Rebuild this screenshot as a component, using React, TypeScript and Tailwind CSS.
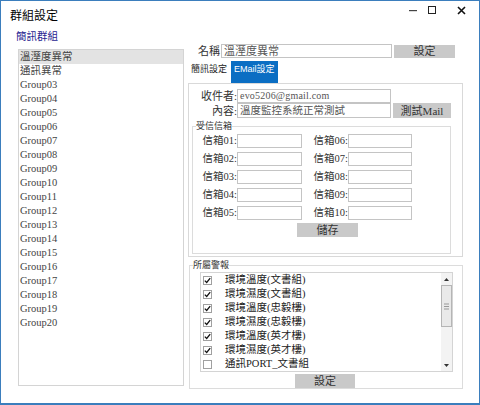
import React from 'react';

const groups = [
  '溫溼度異常',
  '通訊異常',
  ...Array.from({ length: 18 }, (_, i) => `Group${String(i + 3).padStart(2, '0')}`),
];

const alarms = [
  { label: '環境溫度(文書組)', checked: true },
  { label: '環境濕度(文書組)', checked: true },
  { label: '環境溫度(忠毅樓)', checked: true },
  { label: '環境濕度(忠毅樓)', checked: true },
  { label: '環境溫度(英才樓)', checked: true },
  { label: '環境濕度(英才樓)', checked: true },
  { label: '通訊PORT_文書組', checked: false },
];

const mailRows = [1, 2, 3, 4, 5];

function GrayButton({ label, className }: { label: string; className: string }) {
  return (
    <div
      className={`flex items-center justify-center whitespace-nowrap bg-[#c9c9c9] text-[11px] leading-[12px] text-[#333] ${className}`}
    >
      {label}
    </div>
  );
}

function Field({ value, className }: { value?: string; className: string }) {
  return (
    <div
      className={`flex items-center whitespace-nowrap border border-[#c4c4c4] bg-white pl-[2px] text-[#555] ${className}`}
    >
      {value}
    </div>
  );
}

function CheckBox({ checked }: { checked: boolean }) {
  return (
    <div className="flex h-[9px] w-[9px] items-center justify-center border border-[#a0a0a0] bg-white">
      {checked && (
        <svg width="7" height="7" viewBox="0 0 7 7">
          <path d="M0.8 3.6 L2.7 5.5 L6.2 1.2" fill="none" stroke="#111" strokeWidth="1.3" />
        </svg>
      )}
    </div>
  );
}

export default function App() {
  return (
    <div className="h-[405px] w-[480px] overflow-hidden border border-b-2 border-[#3b7ebd] bg-white font-['Liberation_Serif','Noto_Sans_CJK_TC',serif] text-[#333]">
      {/* Title bar */}
      <div className="flex h-[28px]">
        <div className="self-center pl-[9px] pt-[1px] font-['Liberation_Sans','Noto_Sans_CJK_TC',sans-serif] text-[12px] leading-[14px] text-black">
          群組設定
        </div>
        <div className="ml-auto mr-[13px] mt-[5px] flex items-start">
          <svg width="8" height="8" viewBox="0 0 8 8">
            <rect x="0" y="4" width="8" height="1.2" fill="#444" />
          </svg>
          <svg width="8" height="8" viewBox="0 0 8 8" className="ml-[11px]">
            <rect x="0.5" y="0.5" width="7" height="7" fill="none" stroke="#222" />
          </svg>
          <svg width="9" height="9" viewBox="0 0 9 9" className="ml-[21px]">
            <path d="M1 1 L8 8 M8 1 L1 8" stroke="#111" strokeWidth="1.6" />
          </svg>
        </div>
      </div>

      <div className="flex items-start">
        {/* Left: group list */}
        <div className="w-[183px]">
          <div className="ml-[15px] font-['Noto_Sans_CJK_TC',sans-serif] text-[10.5px] leading-[13px] text-[#1f2390]">
            簡訊群組
          </div>
          <div className="ml-[17px] mt-[7px] h-[337px] w-[166px] border border-[#d4d4d4]">
            {groups.map((g, i) => (
              <div
                key={g}
                className={`h-[14px] pl-[1px] text-[10.5px] leading-[14px] text-[#444] ${i === 0 ? 'bg-[#e3e3e3]' : ''}`}
              >
                {g}
              </div>
            ))}
          </div>
        </div>

        {/* Right: settings */}
        <div className="ml-[3px] mt-[15px] w-[276px]">
          <div className="flex h-[14px] items-center">
            <div className="w-[33px] whitespace-nowrap text-right text-[11px] leading-[14px] text-[#333]">名稱</div>
            <Field value="溫溼度異常" className="ml-[1px] h-[14px] w-[171px] text-[11px] leading-[12px] text-[#333]" />
            <GrayButton label="設定" className="ml-[2px] h-[13px] w-[61px]" />
          </div>

          {/* Tabs */}
          <div className="mt-[3px] flex h-[22px] items-stretch font-['Liberation_Sans','Noto_Sans_CJK_TC',sans-serif] text-[9px] leading-[10px]">
            <div className="ml-[4px] pt-[3px] text-[#222]">簡訊設定</div>
            <div className="ml-[4px] bg-[#0b6ec3] px-[3px] pt-[3px] text-white">EMail設定</div>
          </div>

          {/* Tab page */}
          <div className="ml-[1px] h-[174px] w-[275px] border border-[#d9d9d9]">
            <div className="mt-[5px] flex h-[14px] items-center">
              <div className="w-[48px] whitespace-nowrap text-right text-[11px] leading-[14px]">收件者:</div>
              <Field value="evo5206@gmail.com" className="h-[14px] w-[154px] text-[10px] leading-[12px] tracking-[0.2px]" />
            </div>
            <div className="flex h-[15px] items-center">
              <div className="w-[48px] whitespace-nowrap text-right text-[11px] leading-[14px]">內容:</div>
              <Field value="溫度監控系統正常測試" className="h-[15px] w-[154px] text-[10.5px] leading-[12px]" />
              <GrayButton label="測試Mail" className="ml-[2px] h-[15px] w-[58px]" />
            </div>

            <fieldset className="ml-[3px] mt-[2px] w-[259px] border border-[#dcdcdc] pb-[16px]">
              <legend className="ml-[3px] text-[9px] leading-[12px] text-[#333]">受信信箱</legend>
              <div className="mt-[2px] flex flex-col gap-[4px]">
                {mailRows.map((n) => (
                  <div key={n} className="flex h-[14px] items-center text-[10.5px] leading-[14px]">
                    <div className="ml-[8px] flex w-[36px] justify-end whitespace-nowrap">
                      信箱{String(n).padStart(2, '0')}:
                    </div>
                    <Field className="h-[14px] w-[65px]" />
                    <div className="ml-[10px] flex w-[36px] justify-end whitespace-nowrap">
                      信箱{String(n + 5).padStart(2, '0')}:
                    </div>
                    <Field className="h-[14px] w-[64px]" />
                  </div>
                ))}
              </div>
              <GrayButton label="儲存" className="ml-[104px] mt-[3px] h-[14px] w-[61px]" />
            </fieldset>
          </div>

          {/* Alarm list */}
          <fieldset className="ml-[2px] mt-[2px] w-[274px] border border-[#dcdcdc]">
            <legend className="ml-[3px] text-[9px] leading-[12px] text-[#333]">所屬警報</legend>
            <div className="ml-[10px] mt-[1px] flex h-[100px] w-[253px] border border-[#d4d4d4]">
              <div className="flex-1">
                {alarms.map((a) => (
                  <div key={a.label} className="flex h-[14px] items-center pl-[2px]">
                    <CheckBox checked={a.checked} />
                    <div className="ml-[13px] whitespace-nowrap text-[10.5px] leading-[14px] text-[#222]">{a.label}</div>
                  </div>
                ))}
              </div>
              <div className="flex w-[11px] flex-col bg-[#f3f3f3]">
                <div className="flex h-[12px] items-center justify-center">
                  <svg width="5" height="3" viewBox="0 0 5 3">
                    <path d="M0 3 L2.5 0 L5 3 Z" fill="#333" />
                  </svg>
                </div>
                <div className="flex h-[42px] items-center justify-center border border-[#b5b5b5] bg-[#e9e9e9]">
                  <svg width="5" height="7" viewBox="0 0 5 7">
                    <path d="M0 1 H5 M0 3.5 H5 M0 6 H5" stroke="#999" strokeWidth="1" />
                  </svg>
                </div>
                <div className="flex-1" />
                <div className="flex h-[12px] items-center justify-center">
                  <svg width="5" height="3" viewBox="0 0 5 3">
                    <path d="M0 0 L5 0 L2.5 3 Z" fill="#333" />
                  </svg>
                </div>
              </div>
            </div>
            <GrayButton label="設定" className="ml-[105px] mt-[2px] h-[14px] w-[60px]" />
          </fieldset>
        </div>
      </div>
    </div>
  );
}
